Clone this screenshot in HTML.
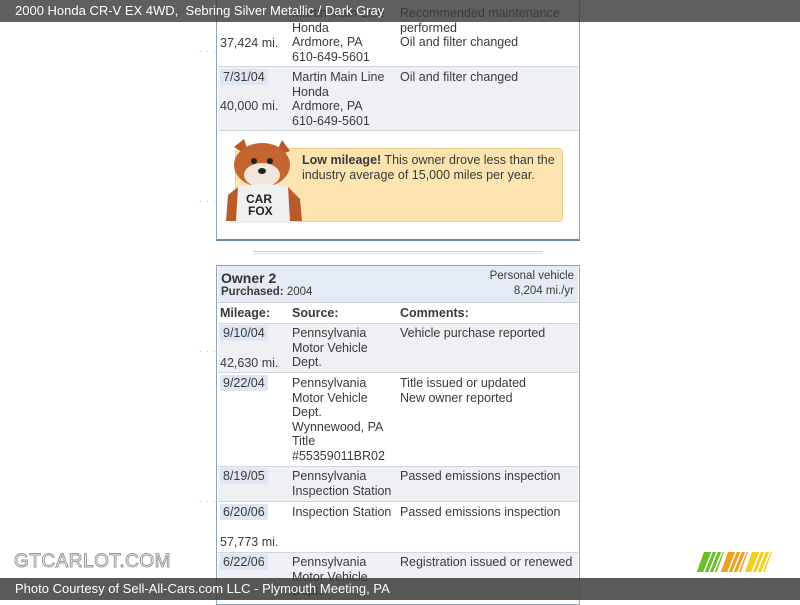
<!DOCTYPE html>
<html><head><meta charset="utf-8"><style>
*{margin:0;padding:0;box-sizing:border-box}
body{width:800px;height:600px;overflow:hidden;background:#fff;font-family:"Liberation Sans",sans-serif;color:#3a3a3a;font-size:12.5px;position:relative}
.a{position:absolute}
.t{line-height:14.6px;white-space:nowrap}
.d{background:#dde6f2;padding:1px 3px;border-radius:2px}
.row{position:absolute;left:218px;width:360px}
.dots{position:absolute;left:199px;color:#c9a640;font-size:9px;letter-spacing:1px}
</style></head><body>
<div class="a" style="left:216px;top:0;width:364px;height:241px;border:1px solid #8fa3b8;border-top:none;border-bottom:2px solid #6b87a3"></div>
<div class="row" style="top:0;height:67px;background:#fff;border-bottom:1px solid #d0d6de"></div>
<div class="row" style="top:67px;height:64px;background:#eef0f4;border-bottom:1px solid #d0d6de"></div>
<div class="a t" style="left:220px;top:36px">37,424 mi.</div>
<div class="a t" style="left:292px;top:6px">Martin Main Line<br>Honda<br>Ardmore, PA<br>610-649-5601</div>
<div class="a t" style="left:400px;top:6px">Recommended maintenance<br>performed<br>Oil and filter changed</div>
<div class="a t" style="left:220px;top:70px"><span class="d">7/31/04</span></div>
<div class="a t" style="left:220px;top:99px">40,000 mi.</div>
<div class="a t" style="left:292px;top:70px">Martin Main Line<br>Honda<br>Ardmore, PA<br>610-649-5601</div>
<div class="a t" style="left:400px;top:70px">Oil and filter changed</div>
<div class="a" style="left:235px;top:148px;width:328px;height:74px;background:#fde3b0;border:1px solid #f0d08c;border-radius:4px"></div>
<div class="a t" style="left:302px;top:153px">
<b>Low mileage!</b> This owner drove less than the<br>industry average of 15,000 miles per year.</div>
<svg class="a" style="left:224px;top:137px" width="80" height="88">
<path d="M10 10 L20 2 L26 20 Z" fill="#b85a2a"/><path d="M50 20 L58 3 L66 14 Z" fill="#b85a2a"/>
<ellipse cx="38" cy="28" rx="28" ry="22" fill="#c4642e"/>
<ellipse cx="38" cy="38" rx="18" ry="12" fill="#f2e6da"/>
<circle cx="30" cy="24" r="3" fill="#222"/><circle cx="46" cy="24" r="3" fill="#222"/>
<ellipse cx="38" cy="34" rx="4" ry="3" fill="#222"/>
<path d="M14 50 Q38 44 64 50 L70 86 L6 86 Z" fill="#f0f0f0"/>
<path d="M4 58 L14 50 L12 84 L2 84 Z" fill="#b85a2a"/><path d="M64 50 L76 62 L78 84 L66 84 Z" fill="#b85a2a"/>
<text x="22" y="66" font-family="Liberation Sans" font-weight="bold" font-size="12" fill="#222">CAR</text>
<text x="24" y="78" font-family="Liberation Sans" font-weight="bold" font-size="12" fill="#222">FOX</text>
</svg>
<div class="dots" style="top:44px">. . .</div>
<div class="dots" style="top:194px">. . .</div>
<div class="a" style="left:253px;top:251px;width:290px;height:3px;border-top:1px solid #ccc;border-bottom:1px solid #ddd"></div>
<div class="a" style="left:216px;top:265px;width:364px;height:340px;border:1px solid #8fa3b8"></div>
<div class="row" style="top:266px;height:37px;background:#e5ebf4;border-bottom:1px solid #c4ceda"></div>
<div class="a" style="left:221px;top:270px;font-size:14px;font-weight:bold;color:#333">Owner 2</div>
<div class="a" style="left:221px;top:286px;font-size:11.5px"><b>Purchased:</b> 2004</div>
<div class="a t" style="right:226px;top:269px;text-align:right;font-size:11.5px">Personal vehicle<br>8,204 mi./yr</div>
<div class="a t" style="left:220px;top:306px;font-weight:bold">Mileage:</div>
<div class="a t" style="left:292px;top:306px;font-weight:bold">Source:</div>
<div class="a t" style="left:400px;top:306px;font-weight:bold">Comments:</div>
<div class="row" style="top:323px;height:50px;background:#eef0f4;border-top:1px solid #d0d6de;border-bottom:1px solid #d0d6de"></div>
<div class="row" style="top:466px;height:36px;background:#eef0f4;border-top:1px solid #d0d6de;border-bottom:1px solid #d0d6de"></div>
<div class="row" style="top:552px;height:48px;background:#eef0f4;border-top:1px solid #d0d6de"></div>
<div class="a t" style="left:220px;top:326px"><span class="d">9/10/04</span></div>
<div class="a t" style="left:220px;top:356px">42,630 mi.</div>
<div class="a t" style="left:292px;top:326px">Pennsylvania<br>Motor Vehicle<br>Dept.</div>
<div class="a t" style="left:400px;top:326px">Vehicle purchase reported</div>
<div class="a t" style="left:220px;top:376px"><span class="d">9/22/04</span></div>
<div class="a t" style="left:292px;top:376px">Pennsylvania<br>Motor Vehicle<br>Dept.<br>Wynnewood, PA<br>Title<br>#55359011BR02</div>
<div class="a t" style="left:400px;top:376px">Title issued or updated<br>New owner reported</div>
<div class="a t" style="left:220px;top:469px"><span class="d">8/19/05</span></div>
<div class="a t" style="left:292px;top:469px">Pennsylvania<br>Inspection Station</div>
<div class="a t" style="left:400px;top:469px">Passed emissions inspection</div>
<div class="a t" style="left:220px;top:505px"><span class="d">6/20/06</span></div>
<div class="a t" style="left:220px;top:535px">57,773 mi.</div>
<div class="a t" style="left:292px;top:505px">Inspection Station</div>
<div class="a t" style="left:400px;top:505px">Passed emissions inspection</div>
<div class="a t" style="left:220px;top:555px"><span class="d">6/22/06</span></div>
<div class="a t" style="left:292px;top:555px">Pennsylvania<br>Motor Vehicle<br>Dept.</div>
<div class="a t" style="left:400px;top:555px">Registration issued or renewed</div>
<div class="dots" style="top:344px">. . .</div>
<div class="dots" style="top:494px">. . .</div>
<div class="a" style="left:14px;top:551px;font-size:19px;color:#fff;-webkit-text-stroke:1px #999;letter-spacing:0.5px">GTCARLOT.COM</div>
<svg class="a" style="left:696px;top:552px" width="78" height="22">
<g transform="skewX(-20)"><rect x="8" y="0" width="20" height="20" fill="#6cbf2a"/><rect x="32" y="0" width="20" height="20" fill="#f0a020"/><rect x="56" y="0" width="20" height="20" fill="#f2d020"/></g>
<g stroke="#fff" stroke-width="1.5"><path d="M8 20 L16 0 M13 20 L21 0 M18 20 L26 0 M32 20 L40 0 M37 20 L45 0 M42 20 L50 0 M56 20 L64 0 M61 20 L69 0 M66 20 L74 0"/></g>
</svg>
<div class="a" style="left:0;top:0;width:800px;height:22px;background:rgba(60,60,60,0.82);color:#fff;font-size:13px;line-height:22px;padding-left:15px">2000 Honda CR-V EX 4WD,&nbsp; Sebring Silver Metallic / Dark Gray</div>
<div class="a" style="left:0;top:578px;width:800px;height:22px;background:rgba(60,60,60,0.85);color:#fff;font-size:13px;line-height:22px;padding-left:15px">Photo Courtesy of Sell-All-Cars.com LLC - Plymouth Meeting, PA</div>
</body></html>
